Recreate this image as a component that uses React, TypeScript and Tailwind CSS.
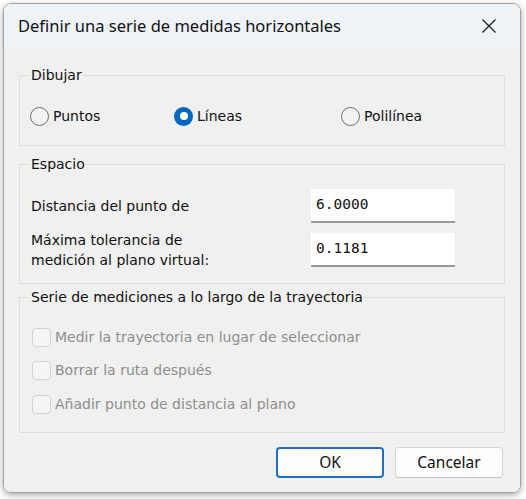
import React from "react";

const body = { fontFamily: '"DejaVu Sans", sans-serif' };

function Radio({ checked, label }: { checked?: boolean; label: string }) {
  return (
    <div className="flex items-center h-[20px]">
      {checked ? (
        <span className="w-[19px] h-[19px] rounded-full bg-[#0067c0] flex items-center justify-center">
          <span className="w-[8px] h-[8px] rounded-full bg-white" />
        </span>
      ) : (
        <span className="w-[19px] h-[19px] rounded-full border-[1.5px] border-[#6e6e6e] bg-[#f3f3f3]" />
      )}
      <span className="ml-[4px] text-[14px] text-[#111]">{label}</span>
    </div>
  );
}

function Check({ label }: { label: string }) {
  return (
    <div className="flex items-center h-[20px]">
      <span className="w-[19px] h-[19px] rounded-[4px] border border-[#d2d2d2] bg-[#f5f5f5] ml-[1px]" />
      <span className="ml-[4px] text-[14px] text-[#8e8e8e]">{label}</span>
    </div>
  );
}

export default function App() {
  return (
    <div className="w-[526px] h-[499px] bg-white pt-[3px] pl-[3px]" style={body}>
      <div className="w-[518px] h-[490px] rounded-[8px] border border-[#a3a3a3] overflow-hidden flex flex-col shadow-[0_2px_6px_rgba(0,0,0,0.35)]">
        <div className="h-[44px] bg-[#eef3f8] flex items-center justify-between pl-[14px] pr-[20px]">
          <span
            className="text-[16.5px] text-[#111]"
            style={{ fontFamily: '"Noto Sans", sans-serif' }}
          >
            Definir una serie de medidas horizontales
          </span>
          <svg width="16" height="16" viewBox="0 0 16 16" className="mr-[3px]">
            <path d="M1.5 1.5 L14.5 14.5 M14.5 1.5 L1.5 14.5" stroke="#1a1a1a" strokeWidth="1.2" fill="none" />
          </svg>
        </div>
        <div className="flex-1 bg-[#f0f0f0] px-[15px] pt-[17px] flex flex-col">
          <fieldset className="border border-[#dcdcdc] pl-[10px] pt-[21px] pb-[19px]">
            <legend className="px-[1px] text-[14px] leading-[20px] text-[#111]">Dibujar</legend>
            <div className="flex items-center">
              <div className="w-[144px]"><Radio label="Puntos" /></div>
              <div className="w-[167px]"><Radio checked label="Líneas" /></div>
              <div><Radio label="Polilínea" /></div>
            </div>
          </fieldset>

          <fieldset className="mt-[8px] border border-[#dcdcdc] pl-[11px] pt-[15px] pb-[13px]">
            <legend className="ml-[-1px] px-[1px] text-[14px] leading-[20px] text-[#111]">Espacio</legend>
            <div className="flex items-center">
              <div className="w-[280px] text-[14px] leading-[20px] text-[#111]">Distancia del punto de</div>
              <div
                className="w-[144px] h-[34px] bg-white border-b-2 border-[#999] flex items-center pl-[5px] text-[14.5px] text-[#111]"
                style={{ fontFamily: '"DejaVu Sans Mono", monospace' }}
              >
                6.0000
              </div>
            </div>
            <div className="flex items-center mt-[7px]">
              <div className="w-[280px] text-[14px] leading-[20px] text-[#111]">
                Máxima tolerancia de
                <br />
                medición al plano virtual:
              </div>
              <div
                className="w-[144px] h-[34px] bg-white border-b-2 border-[#999] flex items-center pl-[5px] text-[14.5px] text-[#111]"
                style={{ fontFamily: '"DejaVu Sans Mono", monospace' }}
              >
                0.1181
              </div>
            </div>
          </fieldset>

          <fieldset className="mt-[3px] border border-[#dcdcdc] pl-[11px] pt-[20px] pb-[18px]">
            <legend className="ml-[-1px] px-[1px] text-[14px] leading-[20px] text-[#111]">
              Serie de mediciones a lo largo de la trayectoria
            </legend>
            <Check label="Medir la trayectoria en lugar de seleccionar" />
            <div className="mt-[13px]"><Check label="Borrar la ruta después" /></div>
            <div className="mt-[14px]"><Check label="Añadir punto de distancia al plano" /></div>
          </fieldset>

          <div className="flex justify-end mt-[14px] pr-[2px] gap-[11px]" style={{ fontFamily: '"Noto Sans", sans-serif' }}>
            <button className="w-[108px] h-[31px] rounded-[4px] border-2 border-[#1f6fc5] bg-[#fdfdfd] text-[15.5px] text-[#111]">
              OK
            </button>
            <button className="w-[108px] h-[31px] rounded-[4px] border border-[#d3d3d3] border-b-[#c0c0c0] bg-[#fdfdfd] text-[15.5px] text-[#111]">
              Cancelar
            </button>
          </div>
        </div>
      </div>
    </div>
  );
}
